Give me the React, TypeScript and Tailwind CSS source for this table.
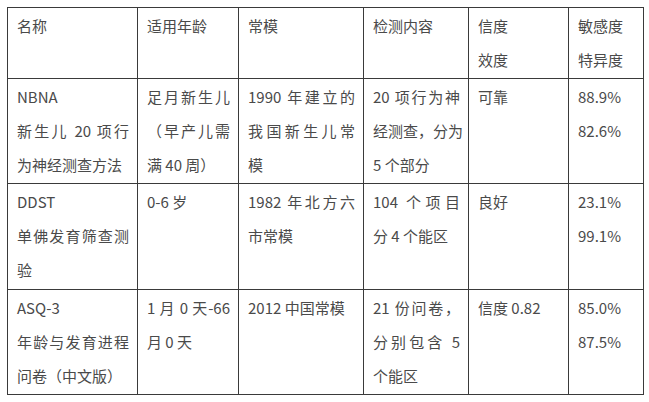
import React from "react";

type Cell = string[][];

// column widths and row heights, measured from the picture
const colClasses = ["w-[130px]", "w-[101px]", "w-[125px]", "w-[105px]", "w-[100px]", "w-[75px]"];
const rowClasses = ["h-[71px]", "h-[105px]", "h-[106px]", "h-[105px]"];

const rows: Cell[][] = [
    [
        [["名称"]],
        [["适用年龄"]],
        [["常模"]],
        [["检测内容"]],
        [["信度"], ["效度"]],
        [["敏感度"], ["特异度"]],
    ],
    [
        [["NBNA"], ["新生儿 20 项行", "为神经测查方法"]],
        [["足月新生儿", "（早产儿需", "满 40 周）"]],
        [["1990 年建立的", "我国新生儿常", "模"]],
        [["20 项行为神", "经测查，分为", "5 个部分"]],
        [["可靠"]],
        [["88.9%"], ["82.6%"]],
    ],
    [
        [["DDST"], ["单佛发育筛查测", "验"]],
        [["0-6 岁"]],
        [["1982 年北方六", "市常模"]],
        [["104 个项目", "分 4 个能区"]],
        [["良好"]],
        [["23.1%"], ["99.1%"]],
    ],
    [
        [["ASQ-3"], ["年龄与发育进程", "问卷（中文版）"]],
        [["1 月 0 天-66", "月 0 天"]],
        [["2012 中国常模"]],
        [["21 份问卷，", "分别包含 5", "个能区"]],
        [["信度 0.82"]],
        [["85.0%"], ["87.5%"]],
    ],
];

const App = () => {
    return (
        <div className="bg-white w-[649px] h-[402px] pl-[7px] pt-[7px] text-[#4a4a4a] text-[15px] leading-[34px] font-['Noto_Sans_CJK_SC','Noto_Sans',sans-serif]">
            <table className="table-fixed border-collapse w-[636px]">
                <colgroup>
                    {colClasses.map((w, i) => (
                        <col key={i} className={w} />
                    ))}
                </colgroup>
                <tbody>
                    {rows.map((row, r) => (
                        <tr key={r} className={rowClasses[r]}>
                            {row.map((cell, c) => (
                                <td
                                    key={c}
                                    className="border border-[#3a3a3a] align-top pl-[9px] pr-[8px] pt-[1px] pb-0"
                                >
                                    {/* every line but the last of a paragraph is spread to the cell width */}
                                    {cell.map((para, p) =>
                                        para.map((line, l) => (
                                            <div
                                                key={p + "-" + l}
                                                className={
                                                    l < para.length - 1
                                                        ? "whitespace-pre text-justify [text-align-last:justify]"
                                                        : "whitespace-pre"
                                                }
                                            >
                                                {line}
                                            </div>
                                        ))
                                    )}
                                </td>
                            ))}
                        </tr>
                    ))}
                </tbody>
            </table>
        </div>
    );
};

export default App;
